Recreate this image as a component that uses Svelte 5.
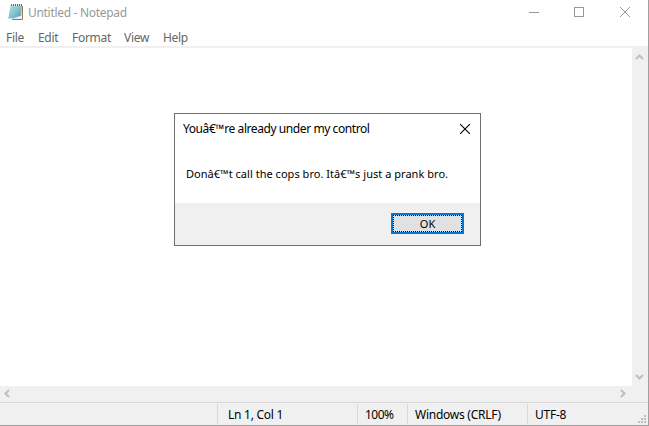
<script>
  const menus = [
    { label: 'File', width: 32 },
    { label: 'Edit', width: 34 },
    { label: 'Format', width: 52 },
    { label: 'View', width: 39 },
    { label: 'Help', width: 40 }
  ];
  const cells = [
    { id: 'pos', text: 'Ln 1, Col 1' },
    { id: 'zoom', text: '100%' },
    { id: 'eol', text: 'Windows (CRLF)' },
    { id: 'enc', text: 'UTF-8' }
  ];
</script>

<div class="window">
  <header class="titlebar">
    <svg class="appicon" width="16" height="17" viewBox="0 0 16 17">
      <defs>
        <linearGradient id="page" x1="0" y1="0" x2="1" y2="1">
          <stop offset="0" stop-color="#b5e0e8" />
          <stop offset=".5" stop-color="#86c3d0" />
          <stop offset="1" stop-color="#479bb0" />
        </linearGradient>
      </defs>
      <path d="M4 15.5H14.5V2" fill="none" stroke="#9a7a52" />
      <path d="M2.5 1.5H14L13 14.5H.2Z" fill="url(#page)" />
      <path d="M4 14.8L13.4 11.5V14.8Z" fill="#eef5f5" />
      <path d="M3 1H14.5" stroke="#59656a" stroke-dasharray="1 1" stroke-width="2" />
    </svg>
    <span class="caption">Untitled - Notepad</span>
    <svg class="controls" width="112" height="24" viewBox="0 0 112 24" fill="none" stroke="#999" shape-rendering="crispEdges">
      <path d="M9 12.5H19M54.5 7.5H63.5V16.5H54.5Z" />
      <path d="M100 7L110 17M110 7L100 17" shape-rendering="auto" />
    </svg>
  </header>
  <nav class="menu">
    {#each menus as m}<span style:width="{m.width}px">{m.label}</span>{/each}
  </nav>
  <main class="body">
    <div class="paper"></div>
    <div class="vscroll">
      <svg width="9" height="6" viewBox="0 0 9 6"><path d="M1 5L4.5 1.5L8 5" /></svg>
      <svg width="9" height="6" viewBox="0 0 9 6"><path d="M1 1L4.5 4.5L8 1" /></svg>
    </div>
  </main>
  <div class="hscroll">
    <svg width="6" height="9" viewBox="0 0 6 9"><path d="M5 1L1.5 4.5L5 8" /></svg>
    <svg width="6" height="9" viewBox="0 0 6 9"><path d="M1 1L4.5 4.5L1 8" /></svg>
  </div>
  <footer class="status">
    {#each cells as c}<div class="cell {c.id}"><span>{c.text}</span></div>{/each}
    <svg class="grip" width="8" height="8" viewBox="0 0 8 8" fill="#bfbfbf">
      <path d="M6 0h2v2h-2zM3 3h2v2h-2zM6 3h2v2h-2zM0 6h2v2h-2zM3 6h2v2h-2zM6 6h2v2h-2z" />
    </svg>
  </footer>

  <section class="dialog" role="dialog">
    <div class="dtitle">
      <span>Youâ€™re already under my control</span>
      <svg width="10" height="10" viewBox="0 0 10 10"><path d="M0 0L10 10M10 0L0 10" stroke="#000" stroke-width="1.1" /></svg>
    </div>
    <p>Donâ€™t call the cops bro. Itâ€™s just a prank bro.</p>
    <div class="actions"><button><span>OK</span></button></div>
  </section>
</div>

<style>
  :global(body) { margin: 0; }
  .window {
    position: relative; box-sizing: border-box; width: 649px; height: 426px;
    display: flex; flex-direction: column; background: #fff; overflow: hidden;
    border-right: 1px solid #a0a0a0; border-bottom: 1px solid #a0a0a0;
    font: 12px/16px "Noto Sans", "Open Sans", sans-serif; color: #000; white-space: nowrap;
  }
  svg { display: block; flex: none; }
  .titlebar { height: 26px; display: flex; align-items: flex-start; color: #999; }
  .appicon { margin: 4px 0 0 8px; }
  .caption { margin: 5px auto 0 4px; letter-spacing: -0.3px; }
  .controls { margin-right: 16px; }
  .menu { height: 20px; display: flex; padding: 4px 0 0 6px; box-sizing: border-box; color: #666; letter-spacing: -0.3px; }
  .body { height: 340px; display: flex; border-top: 2px solid #f0f0f0; box-sizing: border-box; }
  .paper { flex: 1; }
  .vscroll { width: 16px; background: #f0f0f0; display: flex; flex-direction: column; justify-content: space-between; align-items: center; padding: 6px 1px 6px 0; box-sizing: border-box; }
  .hscroll { height: 16px; background: #f0f0f0; display: flex; justify-content: space-between; align-items: center; padding: 0 22px 1px 4px; box-sizing: border-box; }
  .vscroll path, .hscroll path { fill: none; stroke: #bfbfbf; stroke-width: 2; }
  .status { height: 23px; background: #f0f0f0; border-top: 1px solid #d7d7d7; box-sizing: border-box; display: flex; padding: 1px 0 1px 217px; }
  .cell { border-left: 1px solid #d7d7d7; box-sizing: border-box; padding: 3px 0 0 7px; flex: none; letter-spacing: -0.25px; }
  .pos { width: 140px; padding-left: 10px; }
  .zoom { width: 50px; letter-spacing: -0.5px; }
  .eol { width: 120px; }
  .enc { width: 111px; }
  .grip { margin: 11px 0 0 0; }
  .dialog {
    position: absolute; left: 174px; top: 113px; width: 307px; height: 133px; box-sizing: border-box;
    border: 1px solid #707070; background: #fff; display: flex; flex-direction: column;
  }
  .dtitle { height: 30px; display: flex; justify-content: space-between; align-items: center; padding: 0 10px 0 8px; letter-spacing: -0.42px; }
  .dialog p { margin: 0; padding: 22px 0 0 11px; height: 59px; box-sizing: border-box; font-size: 11px; letter-spacing: 0.03px; }
  .actions { flex: 1; background: #f0f0f0; display: flex; justify-content: flex-end; padding: 10px 16px 11px 0; }
  button {
    width: 73px; height: 21px; box-sizing: border-box; border: 2px solid #0078d7; background: #e1e1e1;
    outline: 1px dotted #000; outline-offset: -3px; padding: 0; font: 11px/15px "Noto Sans", sans-serif; color: #000;
  }
</style>
